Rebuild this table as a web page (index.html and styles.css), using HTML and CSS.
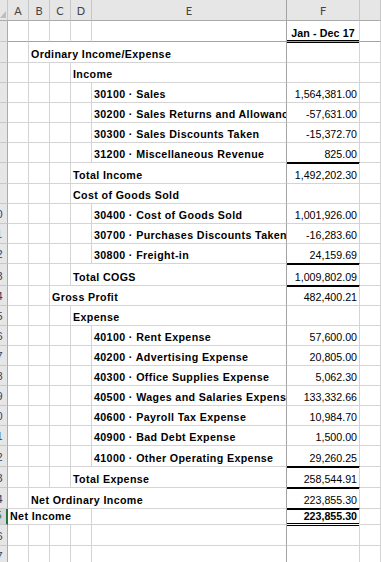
FILE: index.html
```html
<!DOCTYPE html>
<html>
<head>
<meta charset="utf-8">
<link rel="stylesheet" href="styles.css">
</head>
<body>
<div class="sheet">
  <div class="row hdr">
    <div class="c corner"><svg width="7" height="20" viewBox="0 0 7 20"><polygon points="0,18 6,18 6,11" fill="#bdbdbd"/></svg></div>
    <div class="c ch">A</div><div class="c ch">B</div><div class="c ch">C</div><div class="c ch">D</div>
    <div class="c ch e">E</div><div class="c ch">F</div><div class="c ch"></div>
  </div>

  <div class="row h21 frz">
    <div class="c rh"><span class="n">1</span></div>
    <div class="c"></div><div class="c"></div><div class="c"></div><div class="c"></div><div class="c e"></div>
    <div class="c f ctr b dbl">Jan - Dec 17</div><div class="c"></div>
  </div>

  <div class="row h21">
    <div class="c rh"><span class="n">2</span></div>
    <div class="c"></div><div class="c b s-be e">Ordinary Income/Expense</div>
    <div class="c f"></div><div class="c"></div>
  </div>

  <div class="row">
    <div class="c rh"><span class="n">3</span></div>
    <div class="c"></div><div class="c"></div><div class="c"></div><div class="c b s-de e">Income</div>
    <div class="c f"></div><div class="c"></div>
  </div>

  <div class="row">
    <div class="c rh"><span class="n">4</span></div>
    <div class="c"></div><div class="c"></div><div class="c"></div><div class="c"></div>
    <div class="c b e">30100 · Sales</div><div class="c f num">1,564,381.00</div><div class="c"></div>
  </div>

  <div class="row">
    <div class="c rh"><span class="n">5</span></div>
    <div class="c"></div><div class="c"></div><div class="c"></div><div class="c"></div>
    <div class="c b e">30200 · Sales Returns and Allowances</div><div class="c f num">-57,631.00</div><div class="c"></div>
  </div>

  <div class="row">
    <div class="c rh"><span class="n">6</span></div>
    <div class="c"></div><div class="c"></div><div class="c"></div><div class="c"></div>
    <div class="c b e">30300 · Sales Discounts Taken</div><div class="c f num">-15,372.70</div><div class="c"></div>
  </div>

  <div class="row">
    <div class="c rh"><span class="n">7</span></div>
    <div class="c"></div><div class="c"></div><div class="c"></div><div class="c"></div>
    <div class="c b e">31200 · Miscellaneous Revenue</div><div class="c f num thk">825.00</div><div class="c"></div>
  </div>

  <div class="row h21">
    <div class="c rh"><span class="n">8</span></div>
    <div class="c"></div><div class="c"></div><div class="c"></div><div class="c b s-de e">Total Income</div>
    <div class="c f num">1,492,202.30</div><div class="c"></div>
  </div>

  <div class="row">
    <div class="c rh"><span class="n">9</span></div>
    <div class="c"></div><div class="c"></div><div class="c"></div><div class="c b s-de e">Cost of Goods Sold</div>
    <div class="c f"></div><div class="c"></div>
  </div>

  <div class="row">
    <div class="c rh"><span class="n">10</span></div>
    <div class="c"></div><div class="c"></div><div class="c"></div><div class="c"></div>
    <div class="c b e">30400 · Cost of Goods Sold</div><div class="c f num">1,001,926.00</div><div class="c"></div>
  </div>

  <div class="row">
    <div class="c rh"><span class="n">11</span></div>
    <div class="c"></div><div class="c"></div><div class="c"></div><div class="c"></div>
    <div class="c b e">30700 · Purchases Discounts Taken</div><div class="c f num">-16,283.60</div><div class="c"></div>
  </div>

  <div class="row">
    <div class="c rh"><span class="n">12</span></div>
    <div class="c"></div><div class="c"></div><div class="c"></div><div class="c"></div>
    <div class="c b e">30800 · Freight-in</div><div class="c f num thk">24,159.69</div><div class="c"></div>
  </div>

  <div class="row h22">
    <div class="c rh"><span class="n">13</span></div>
    <div class="c"></div><div class="c"></div><div class="c"></div><div class="c b s-de e">Total COGS</div>
    <div class="c f num thk">1,009,802.09</div><div class="c"></div>
  </div>

  <div class="row">
    <div class="c rh"><span class="n">14</span></div>
    <div class="c"></div><div class="c"></div><div class="c b s-ce e">Gross Profit</div>
    <div class="c f num">482,400.21</div><div class="c"></div>
  </div>

  <div class="row">
    <div class="c rh"><span class="n">15</span></div>
    <div class="c"></div><div class="c"></div><div class="c"></div><div class="c b s-de e">Expense</div>
    <div class="c f"></div><div class="c"></div>
  </div>

  <div class="row">
    <div class="c rh"><span class="n">16</span></div>
    <div class="c"></div><div class="c"></div><div class="c"></div><div class="c"></div>
    <div class="c b e">40100 · Rent Expense</div><div class="c f num">57,600.00</div><div class="c"></div>
  </div>

  <div class="row">
    <div class="c rh"><span class="n">17</span></div>
    <div class="c"></div><div class="c"></div><div class="c"></div><div class="c"></div>
    <div class="c b e">40200 · Advertising Expense</div><div class="c f num">20,805.00</div><div class="c"></div>
  </div>

  <div class="row">
    <div class="c rh"><span class="n">18</span></div>
    <div class="c"></div><div class="c"></div><div class="c"></div><div class="c"></div>
    <div class="c b e">40300 · Office Supplies Expense</div><div class="c f num">5,062.30</div><div class="c"></div>
  </div>

  <div class="row">
    <div class="c rh"><span class="n">19</span></div>
    <div class="c"></div><div class="c"></div><div class="c"></div><div class="c"></div>
    <div class="c b e">40500 · Wages and Salaries Expense</div><div class="c f num">133,332.66</div><div class="c"></div>
  </div>

  <div class="row">
    <div class="c rh"><span class="n">20</span></div>
    <div class="c"></div><div class="c"></div><div class="c"></div><div class="c"></div>
    <div class="c b e">40600 · Payroll Tax Expense</div><div class="c f num">10,984.70</div><div class="c"></div>
  </div>

  <div class="row">
    <div class="c rh"><span class="n">21</span></div>
    <div class="c"></div><div class="c"></div><div class="c"></div><div class="c"></div>
    <div class="c b e">40900 · Bad Debt Expense</div><div class="c f num">1,500.00</div><div class="c"></div>
  </div>

  <div class="row h21">
    <div class="c rh"><span class="n">22</span></div>
    <div class="c"></div><div class="c"></div><div class="c"></div><div class="c"></div>
    <div class="c b e">41000 · Other Operating Expense</div><div class="c f num thk">29,260.25</div><div class="c"></div>
  </div>

  <div class="row h21">
    <div class="c rh"><span class="n">23</span></div>
    <div class="c"></div><div class="c"></div><div class="c"></div><div class="c b s-de e">Total Expense</div>
    <div class="c f num thk">258,544.91</div><div class="c"></div>
  </div>

  <div class="row h21">
    <div class="c rh"><span class="n">24</span></div>
    <div class="c"></div><div class="c b s-be e">Net Ordinary Income</div>
    <div class="c f num thk">223,855.30</div><div class="c"></div>
  </div>

  <div class="row h16">
    <div class="c rh act"><span class="n">25</span></div>
    <div class="c b s-ad">Net Income</div><div class="c e"></div>
    <div class="c f num b dbl">223,855.30</div><div class="c"></div>
  </div>

  <div class="row h21">
    <div class="c rh"><span class="n">26</span></div>
    <div class="c"></div><div class="c"></div><div class="c"></div><div class="c"></div><div class="c e"></div>
    <div class="c f"></div><div class="c"></div>
  </div>

  <div class="row">
    <div class="c rh"><span class="n">27</span></div>
    <div class="c"></div><div class="c"></div><div class="c"></div><div class="c"></div><div class="c e"></div>
    <div class="c f"></div><div class="c"></div>
  </div>
</div>
</body>
</html>
```

FILE: styles.css
```css
html, body {
  margin: 0;
  padding: 0;
  width: 381px;
  height: 562px;
  overflow: hidden;
  background: #fff;
}

.sheet {
  font-family: "Liberation Sans", Arial, sans-serif;
  font-size: 10.67px;
  color: #000;
}

.row {
  display: grid;
  grid-template-columns: 8px 21px 21px 21px 21px 195px 73px 1fr;
  height: 20px;
}

.row.hdr { height: 21px; }
.row.h21 { height: 21px; }
.row.h22 { height: 22px; }
.row.h16 { height: 16px; }

.c {
  box-sizing: border-box;
  border-right: 1px solid #d4d4d4;
  border-bottom: 1px solid #d4d4d4;
  overflow: hidden;
  white-space: nowrap;
  display: flex;
  align-items: flex-end;
  padding: 0 2px 1px 2px;
  line-height: 13px;
  min-width: 0;
}

.b {
  font-weight: bold;
  letter-spacing: 0.38px;
}

.num.b { letter-spacing: 0; }

.e { border-right-color: #a3a3a3; }

.frz .c { border-bottom-color: #a3a3a3; }
.frz .c.rh { border-bottom-color: #c8c8c8; }

.s-be { grid-column: 3 / 7; }
.s-ce { grid-column: 4 / 7; }
.s-de { grid-column: 5 / 7; }
.s-ad { grid-column: 2 / 6; }

.num {
  justify-content: flex-end;
}

.ctr {
  justify-content: center;
  padding-bottom: 1px;
  letter-spacing: 0.12px;
}

.thk {
  border-bottom-color: #000;
  box-shadow: 0 1px 0 #000;
}

.dbl {
  border-bottom-color: #fff;
  box-shadow: inset 0 -1px 0 #000, 0 1px 0 #000;
}

/* headers */
.hdr .c {
  background: #e6e6e6;
  border-right-color: #c6c6c6;
  border-bottom-color: #ababab;
}

.hdr .c.e { border-right-color: #a3a3a3; }

.ch {
  font-family: Lato, "Liberation Sans", sans-serif;
  font-size: 11px;
  color: #444;
  justify-content: center;
  align-items: center;
  padding: 0;
}

.corner {
  padding: 0;
  align-items: flex-start;
}

.corner svg { display: block; }

.rh {
  background: #e6e6e6;
  border-right-color: #ababab;
  border-bottom-color: #c8c8c8;
  justify-content: flex-end;
  padding: 0 0 2px 0;
  font-family: "Liberation Sans", sans-serif;
  font-size: 11px;
  color: #3a3a5a;
}

.rh .n {
  flex: 0 0 21px;
  width: 21px;
  text-align: center;
}

.rh.act {
  border-right: 2px solid #217346;
  color: #217346;
  background: #d6d6d6;
}
```
